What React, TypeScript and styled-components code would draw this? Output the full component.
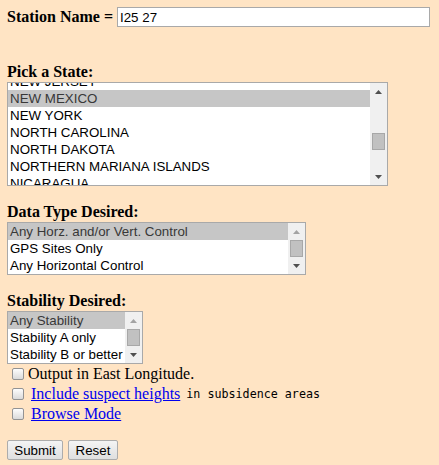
import React, { useLayoutEffect, useRef } from "react";
import styled, { createGlobalStyle } from "styled-components";

const ROW = 17;
const ARROW = 17;
const THUMB = 17;

const GlobalStyle = createGlobalStyle`
  html, body {
    margin: 0;
    padding: 0;
    background: #ffe4c4;
  }
  body {
    font-family: "Liberation Serif", "Times New Roman", serif;
    font-size: 16px;
    color: #000;
  }
`;

const Page = styled.form`
  box-sizing: border-box;
  width: 439px;
  min-height: 465px;
  padding: 7px;
  display: flex;
  flex-direction: column;
  align-items: flex-start;
`;

const StationRow = styled.div`
  display: flex;
  align-items: baseline;
  height: 20px;
`;

const Bold = styled.b`
  font-weight: bold;
  font-size: 16px;
  white-space: nowrap;
`;

const TextInput = styled.input`
  box-sizing: border-box;
  width: 313px;
  height: 20px;
  margin: 0 0 0 4px;
  padding: 0 2px;
  border: 1px solid #a9a9a9;
  background: #fff;
  font-family: "Liberation Sans", Arial, sans-serif;
  font-size: 13.33px;
  color: #000;
  outline: none;
`;

const FieldLabel = styled.b<{ $top: number }>`
  display: block;
  margin-top: ${(p) => p.$top}px;
  margin-bottom: 1px;
  line-height: 18px;
  font-size: 16px;
  font-weight: bold;
`;

const Box = styled.div<{ $width: number; $rows: number }>`
  box-sizing: border-box;
  width: ${(p) => p.$width}px;
  height: ${(p) => p.$rows * ROW + 2}px;
  border: 1px solid #a9a9a9;
  background: #fff;
  display: flex;
  font-family: "Liberation Sans", Arial, sans-serif;
  font-size: 13.33px;
`;

const Viewport = styled.div`
  flex: 1;
  min-width: 0;
  overflow: hidden;
`;

const Option = styled.div<{ $selected?: boolean }>`
  height: ${ROW}px;
  line-height: ${ROW}px;
  padding-left: 2px;
  white-space: nowrap;
  background: ${(p) => (p.$selected ? "#c6c6c6" : "transparent")};
  color: ${(p) => (p.$selected ? "#383838" : "#000")};
`;

const ScrollBar = styled.div`
  flex: none;
  width: 17px;
  background: #f0f0f0;
  display: flex;
  flex-direction: column;
`;

const ArrowButton = styled.div<{ $disabled?: boolean }>`
  flex: none;
  height: ${ARROW}px;
  display: flex;
  align-items: center;
  justify-content: center;
  color: ${(p) => (p.$disabled ? "#a3a3a3" : "#505050")};
`;

const Track = styled.div`
  flex: 1;
  display: flex;
  flex-direction: column;
`;

const Thumb = styled.div`
  box-sizing: border-box;
  width: 13px;
  height: ${THUMB}px;
  margin-left: 2px;
  background: #c1c1c1;
  border: 1px solid #a8a8a8;
`;

const Tri = ({ down }: { down?: boolean }) => (
  <svg width="7" height="4" viewBox="0 0 7 4">
    <polygon points={down ? "0,0 7,0 3.5,4" : "0,4 7,4 3.5,0"} fill="currentColor" />
  </svg>
);

type ListProps = {
  width: number;
  rows: number;
  options: string[];
  selected: number;
  scroll: number;
};

const ListBox = ({ width, rows, options, selected, scroll }: ListProps) => {
  const ref = useRef<HTMLDivElement>(null);
  const maxScroll = Math.max(1, options.length * ROW - rows * ROW);
  const track = rows * ROW - ARROW * 2;
  const thumbTop = Math.round((scroll / maxScroll) * (track - THUMB));
  useLayoutEffect(() => {
    if (ref.current) ref.current.scrollTop = scroll;
  }, [scroll]);
  return (
    <Box $width={width} $rows={rows}>
      <Viewport ref={ref}>
        {options.map((o, i) => (
          <Option key={o} $selected={i === selected}>
            {o}
          </Option>
        ))}
      </Viewport>
      <ScrollBar>
        <ArrowButton $disabled={scroll === 0}>
          <Tri />
        </ArrowButton>
        <Track>
          <Thumb style={{ marginTop: thumbTop }} />
        </Track>
        <ArrowButton $disabled={scroll >= maxScroll}>
          <Tri down />
        </ArrowButton>
      </ScrollBar>
    </Box>
  );
};

const CheckRow = styled.label`
  display: flex;
  align-items: center;
  height: 20px;
  line-height: 20px;
  white-space: nowrap;
`;

const Check = styled.span`
  box-sizing: border-box;
  flex: none;
  width: 12px;
  height: 12px;
  margin-left: 5px;
  border: 1px solid #939393;
  border-radius: 2px;
  background: linear-gradient(#fdfdfd, #dadada);
`;

const CheckText = styled.span<{ $indent: number }>`
  margin-left: ${(p) => p.$indent}px;
`;

const Link = styled.a<{ $indent: number }>`
  margin-left: ${(p) => p.$indent}px;
  color: #0000ee;
  text-decoration: underline;
`;

const Mono = styled.span`
  margin-left: 6px;
  font-family: "DejaVu Sans Mono", "Liberation Mono", monospace;
  font-size: 11.7px;
`;

const ButtonRow = styled.div`
  display: flex;
  gap: 5px;
  margin-top: 16px;
`;

const Button = styled.button<{ $width: number }>`
  box-sizing: border-box;
  width: ${(p) => p.$width}px;
  height: 20px;
  padding: 0;
  border: 1px solid #acacac;
  border-radius: 2px;
  background: linear-gradient(#f4f4f4, #dfdfdf);
  font-family: "Liberation Sans", Arial, sans-serif;
  font-size: 13.33px;
  color: #000;
`;

const STATES = [
  "ALABAMA", "ALASKA", "AMERICAN SAMOA", "ARIZONA", "ARKANSAS", "CALIFORNIA",
  "COLORADO", "CONNECTICUT", "DELAWARE", "DISTRICT OF COLUMBIA", "FLORIDA",
  "GEORGIA", "GUAM", "HAWAII", "IDAHO", "ILLINOIS", "INDIANA", "IOWA", "KANSAS",
  "KENTUCKY", "LOUISIANA", "MAINE", "MARYLAND", "MASSACHUSETTS", "MICHIGAN",
  "MINNESOTA", "MISSISSIPPI", "MISSOURI", "MONTANA", "NEBRASKA", "NEVADA",
  "NEW HAMPSHIRE", "NEW JERSEY", "NEW MEXICO", "NEW YORK", "NORTH CAROLINA",
  "NORTH DAKOTA", "NORTHERN MARIANA ISLANDS", "NICARAGUA", "OHIO", "OKLAHOMA",
  "OREGON", "PENNSYLVANIA", "PUERTO RICO", "RHODE ISLAND", "SOUTH CAROLINA",
  "SOUTH DAKOTA", "TENNESSEE", "TEXAS", "UTAH", "VERMONT", "VIRGINIA",
  "VIRGIN ISLANDS", "WASHINGTON", "WEST VIRGINIA", "WISCONSIN", "WYOMING",
];

const DATA_TYPES = [
  "Any Horz. and/or Vert. Control",
  "GPS Sites Only",
  "Any Horizontal Control",
  "Any Vertical Control",
  "Horizontal and Vertical Control",
];

const STABILITY = [
  "Any Stability",
  "Stability A only",
  "Stability B or better",
  "Stability C or better",
  "Stability D or better",
];

const selState = STATES.indexOf("NEW MEXICO");

export default function App() {
  return (
    <>
      <GlobalStyle />
      <Page onSubmit={(e) => e.preventDefault()}>
        <StationRow>
          <Bold>Station Name =</Bold>
          <TextInput defaultValue="I25 27" />
        </StationRow>

        <FieldLabel $top={36}>Pick a State:</FieldLabel>
        <ListBox width={381} rows={6} options={STATES} selected={selState} scroll={selState * ROW - 7} />

        <FieldLabel $top={17}>Data Type Desired:</FieldLabel>
        <ListBox width={299} rows={3} options={DATA_TYPES} selected={0} scroll={0} />

        <FieldLabel $top={17}>Stability Desired:</FieldLabel>
        <ListBox width={136} rows={3} options={STABILITY} selected={0} scroll={0} />

        <CheckRow>
          <Check />
          <CheckText $indent={4}>Output in East Longitude.</CheckText>
        </CheckRow>
        <CheckRow>
          <Check />
          <Link $indent={7} href="#">Include suspect heights</Link>
          <Mono>in subsidence areas</Mono>
        </CheckRow>
        <CheckRow>
          <Check />
          <Link $indent={7} href="#">Browse Mode</Link>
        </CheckRow>

        <ButtonRow>
          <Button $width={56} type="submit">Submit</Button>
          <Button $width={50} type="reset">Reset</Button>
        </ButtonRow>
      </Page>
    </>
  );
}
